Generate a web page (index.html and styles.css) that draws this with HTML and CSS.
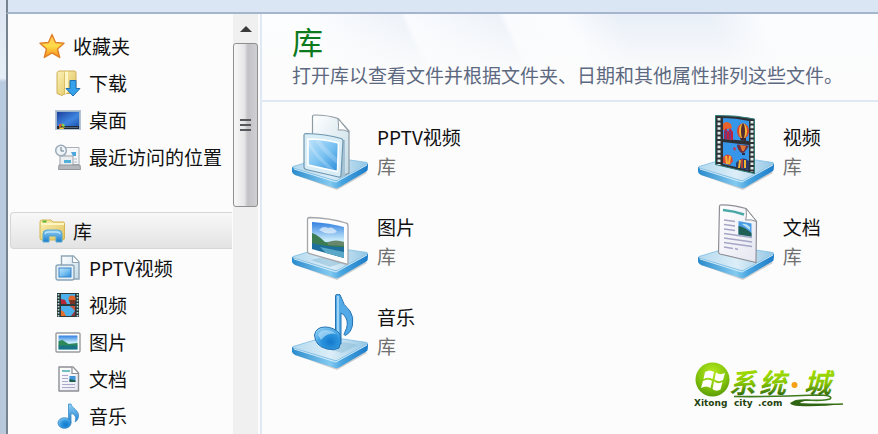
FILE: index.html
```
<!DOCTYPE html>
<html lang="zh-CN">
<head>
  <meta charset="UTF-8">
  <meta name="viewport" content="width=device-width, initial-scale=1">
  <title>库</title>
  <link rel="stylesheet" href="styles.css">
</head>
<body>
  <!-- shared gradients and the base plate of the library icons -->
  <svg class="defs" aria-hidden="true">
    <defs>
      <linearGradient id="gStar" x1="0" y1="0" x2="0" y2="1"><stop offset="0" stop-color="#ffc45a"/><stop offset=".5" stop-color="#ffdc48"/><stop offset="1" stop-color="#f58a18"/></linearGradient>
      <linearGradient id="gFolder" x1="0" y1="0" x2="1" y2="1"><stop offset="0" stop-color="#fbf0b4"/><stop offset="1" stop-color="#dfc25a"/></linearGradient>
      <linearGradient id="gBlue" x1="0" y1="0" x2="0" y2="1"><stop offset="0" stop-color="#8fd0f5"/><stop offset="1" stop-color="#1a7ccc"/></linearGradient>
      <linearGradient id="gDesk" x1="0" y1="0" x2="1" y2="1"><stop offset="0" stop-color="#1b3f9c"/><stop offset=".6" stop-color="#3f86e0"/><stop offset="1" stop-color="#1d55b5"/></linearGradient>
      <linearGradient id="gScreen" x1="0" y1="0" x2="1" y2="1"><stop offset="0" stop-color="#bfe3fa"/><stop offset=".5" stop-color="#7cc3f2"/><stop offset="1" stop-color="#2b8ddc"/></linearGradient>
      <linearGradient id="gPaper" x1="0" y1="0" x2="1" y2="1"><stop offset="0" stop-color="#ffffff"/><stop offset="1" stop-color="#c3dbe6"/></linearGradient>
      <linearGradient id="gDoc" x1="0" y1="0" x2="1" y2="1"><stop offset="0" stop-color="#ffffff"/><stop offset="1" stop-color="#e6e6f2"/></linearGradient>
      <linearGradient id="gSky" x1="0" y1="0" x2="0" y2="1"><stop offset="0" stop-color="#2f7fe0"/><stop offset=".5" stop-color="#c9ebfb"/><stop offset="1" stop-color="#8cc4e6"/></linearGradient>
      <linearGradient id="gTop" x1="0" y1="0" x2="1" y2="0"><stop offset="0" stop-color="#b4d9ee"/><stop offset=".5" stop-color="#dceef8"/><stop offset="1" stop-color="#94c6e4"/></linearGradient>
      <linearGradient id="gSide" x1="0" y1="0" x2="1" y2="0"><stop offset="0" stop-color="#2b8bcc"/><stop offset=".5" stop-color="#84caf0"/><stop offset=".65" stop-color="#4aa6e0"/><stop offset="1" stop-color="#1c7cc8"/></linearGradient>
      <linearGradient id="gLogo" x1="0" y1="0" x2="0" y2="1"><stop offset=".3" stop-color="#9cd800"/><stop offset=".55" stop-color="#86c400"/><stop offset=".85" stop-color="#2f6a10"/></linearGradient>
      <radialGradient id="gBall" cx=".5" cy=".3" r=".7"><stop offset="0" stop-color="#b8ea20"/><stop offset=".6" stop-color="#84c60c"/><stop offset="1" stop-color="#5c9c08"/></radialGradient>
      <radialGradient id="gHead" cx=".6" cy=".65" r=".7"><stop offset="0" stop-color="#1379cc"/><stop offset=".5" stop-color="#2c95de"/><stop offset="1" stop-color="#8ccdf4"/></radialGradient>
      <symbol id="plate" viewBox="0 0 76 76">
        <path d="M3 61 L45 76 L75 59 L70 55 L8 57Z" fill="#000" opacity=".18"/>
        <path d="M0 53 L0 58 Q1 60 3 61 L43 74 Q45 74.500 47 73.500 L75 57 Q76 56 76 50Z" fill="url(#gSide)"/>
        <path d="M1 52.500 L33 43 Q35 42.500 37 43 L75 48.500 Q76.500 49.500 75 50.500 L47 65.500 Q45 67 43 66.500 L1 54Z" fill="url(#gTop)" stroke="#7dbde2" stroke-width=".8"/>
        <path d="M2 55 L44 68 L75 51" fill="none" stroke="#f2fbff" stroke-width="1" opacity=".8"/>
      </symbol>
      <symbol id="video" viewBox="0 0 26 26">
        <rect x="2" y="1" width="22" height="24" fill="#2d3a3c"/>
        <path d="M3.500 2v23M22.500 2v23" stroke="#b7dcdc" stroke-width="1.600" stroke-dasharray="1.600 1.400"/>
        <path d="M6 2h14v10H6zM6 14h14v10H6z" fill="#4cb0ec"/>
        <path d="M6 7l4 1 2 4H6z" fill="#b3263a"/><circle cx="17" cy="7" r="3.500" fill="#e0642a"/><path d="M14 8h6v4h-5z" fill="#7a3428"/>
        <path d="M15 14h5v5z" fill="#c9543a"/><path d="M6 18l3 2 2 4H6z" fill="#e0702e"/><path d="M20 19l-4 5h4z" fill="#8c3838"/>
      </symbol>
    </defs>
  </svg>

  <div class="window">
    <div class="toolbar"></div>
    <div class="content">
      <nav class="sidebar" aria-label="导航窗格">
        <ul class="tree">
          <li>
            <a class="node" href="#">
              <svg class="icon" viewBox="0 0 26 26"><path d="M13 1.500l3.500 8 8.500.8-6.500 5.700 2.200 8.500-7.700-4.600-7.700 4.600L7.500 16 1 10.300l8.500-.8z" fill="url(#gStar)" stroke="#e0812a" stroke-width="1.400" stroke-linejoin="round"/></svg>
              收藏夹
            </a>
          </li>
          <li>
            <a class="node child" href="#">
              <svg class="icon" viewBox="0 0 26 26"><path d="M2 2.500L4 1h15.500q1.500 0 1.500 1.500V22q0 1.500-1.500 1.500H10l-3 2-5-2z" fill="url(#gFolder)" stroke="#cfae58"/><path d="M10 2.500v22" stroke="#d7b654" stroke-width="1.500"/><path d="M10 2l3-.5v20l-3 3z" fill="#fff6c8"/><path d="M15 10.500h6v8h4l-7 7.500-7-7.500h4z" fill="#37a2ec" stroke="#1f6fb4" stroke-linejoin="round"/></svg>
              下载
            </a>
          </li>
          <li>
            <a class="node child" href="#">
              <svg class="icon" viewBox="0 0 26 26"><rect x=".5" y="3.500" width="25" height="19" fill="#9fb4c8" stroke="#b4c4d4"/><rect x="2" y="5" width="22" height="14" fill="url(#gDesk)"/><path d="M2 19h22v3H2z" fill="#1e2a3a"/><path d="M9 20.500h14" stroke="#586878"/><path d="M4 17.500l2.500-1v3l-2.500.5z" fill="#f0602a"/><path d="M7 16.500l2.500 1v2.500L7 19.500z" fill="#8bd03a"/><path d="M4 20.500h5.500l-1 1.500h-4z" fill="#f8d038"/></svg>
              桌面
            </a>
          </li>
          <li>
            <a class="node child" href="#">
              <svg class="icon" viewBox="0 0 26 26"><path d="M10 3.500h14v17H10z" fill="#f4f6f8" stroke="#aab0b6"/><path d="M5 12h13v11H5z" fill="#eceff2" stroke="#9ca2a8"/><path d="M4 21h21l.5 4.500H3.500z" fill="#b4b8bc" stroke="#94989c"/><path d="M9 16h7v3H9z" fill="#4fb0d8"/><path d="M16 8h5v4h-3z" fill="#4da6e0"/><path d="M19 15h3M19 18h3" stroke="#b8bec4"/><circle cx="6" cy="6.500" r="5.300" fill="#eef4f8" stroke="#9cabb8" stroke-width="1.500"/><path d="M6 3v4h3" fill="none" stroke="#667888"/></svg>
              最近访问的位置
            </a>
          </li>
        </ul>
        <ul class="tree">
          <li>
            <a class="node selected" href="#" aria-current="page">
              <svg class="icon" viewBox="0 0 26 26"><path d="M1 4q0-2 2-2h9l2 2h10q1.500 0 1.500 1.500V20q0 2-2 2H3q-2 0-2-2z" fill="url(#gFolder)" stroke="#d4b650"/><path d="M2 6h23" stroke="#fff5c0" stroke-width="2"/><rect x="3.500" y="2.500" width="4" height="2" fill="#58b830"/><path d="M4 24v-8q0-4 4-4h11q4 0 4 4v8h-6v-6h-7v6z" fill="url(#gBlue)" stroke="#5aa8cc" stroke-linejoin="round"/><path d="M6 16q0-2 3-2h9q3 0 3 2" fill="none" stroke="#d8f2fc"/></svg>
              库
            </a>
          </li>
          <li>
            <a class="node child" href="#">
              <svg class="icon" viewBox="0 0 26 26"><path d="M6.500 1h12l5.500 6v17H6.500z" fill="url(#gPaper)" stroke="#8fa6b6" stroke-width="1.400"/><path d="M17.500 1v6.500H24" fill="#fff" stroke="#8fa6b6" stroke-width="1.200"/><rect x="1" y="10" width="18" height="15" rx="2" fill="#e4f0f6" stroke="#8ba4b8" stroke-width="1.400"/><rect x="4" y="13" width="12" height="9" fill="url(#gScreen)" stroke="#3c86c8"/></svg>
              PPTV视频
            </a>
          </li>
          <li>
            <a class="node child" href="#">
              <svg class="icon"><use href="#video"/></svg>
              视频
            </a>
          </li>
          <li>
            <a class="node child" href="#">
              <svg class="icon" viewBox="0 0 26 26"><rect x="1" y="4" width="24" height="19" rx="1" fill="#fff" stroke="#969ca0" stroke-width="1.400"/><rect x="3.500" y="6.500" width="19" height="14" fill="url(#gSky)"/><path d="M3.500 12l4-1 6 4 9-1v3h-19z" fill="#2d8a58"/><path d="M3.500 16.500h19v4h-19z" fill="#1b7486"/></svg>
              图片
            </a>
          </li>
          <li>
            <a class="node child" href="#">
              <svg class="icon" viewBox="0 0 26 26"><path d="M4 1h14l5.500 6v18H4z" fill="url(#gDoc)" stroke="#8c8f94" stroke-width="1.400" stroke-linejoin="round"/><path d="M17 1v6.500h6" fill="#fff" stroke="#8c8f94" stroke-width="1.200"/><path d="M7 5h8" stroke="#3aa8a8" stroke-width="1.400"/><path d="M7 9.500h6M7 12.500h6M7 15.500h6M7 18.500h13M7 21.500h13" stroke="#a9a9cc"/><rect x="14.500" y="10" width="6" height="6" fill="#3f94d8"/><path d="M14.500 13l6 1.500V16h-6z" fill="#1c6048"/></svg>
              文档
            </a>
          </li>
          <li>
            <a class="node child" href="#">
              <svg class="icon" viewBox="0 0 26 26"><path d="M13.500 1h2.500c.5 4 8 6 7.500 12-.2 3-1.500 5-3.500 6 2-5-.5-8-4-8.500V20h-2.500z" fill="url(#gBlue)" stroke="#3b8fca" stroke-width=".8"/><ellipse cx="9.500" cy="20" rx="6.500" ry="5.300" fill="url(#gHead)" stroke="#2a7fc0" stroke-width=".8"/></svg>
              音乐
            </a>
          </li>
        </ul>
      </nav>

      <div class="scrollbar">
        <button class="scroll-up" type="button" aria-label="向上滚动"></button>
        <div class="thumb"><span></span><span></span><span></span></div>
      </div>

      <main class="pane">
        <header class="pane-header">
          <h1>库</h1>
          <p>打开库以查看文件并根据文件夹、日期和其他属性排列这些文件。</p>
        </header>

        <div class="libraries">
          <a class="library" href="#">
            <svg class="big-icon" viewBox="0 0 76 76">
              <use href="#plate"/>
              <path d="M20.500 3Q20.500 1 22.500 1Q36 1 46 4.500L57 17V59L50 62L20.500 52Z" fill="url(#gPaper)" stroke="#8f9ba3" stroke-width="1.200"/>
              <path d="M46 4.500Q47 14 46 16Q52 15 57 18Z" fill="#fff" stroke="#8f9ba3"/>
              <path d="M50.500 26L53 26V61L48 64Z" fill="#a5c3d2"/>
              <path d="M12 21Q12 19.500 14 19.500Q34 20 49 24.500Q51 25 51 27L49 61Q49 63.500 46.500 63L14 55.500Q12 55 12 53Z" fill="#d9edf6" stroke="#6f96ae" stroke-width="1.200"/>
              <path d="M16 25Q32 25 46.500 29L45.500 57.500L16 51Z" fill="url(#gScreen)" stroke="#fff" stroke-width="1.600"/>
              <path d="M17 27Q24 40 43 56L36 54.500Q22 42 17 32Z" fill="#fff" opacity=".2"/>
              <path d="M28 27Q36 36 45 44V50Q30 38 23 26.500Z" fill="#fff" opacity=".2"/>
            </svg>
            <span class="label"><strong>PPTV视频</strong><small>库</small></span>
          </a>

          <a class="library" href="#">
            <svg class="big-icon" viewBox="0 0 76 76">
              <use href="#plate"/>
              <path d="M17.500 1.500Q38 1 56.500 5V59.500L45 57L17.500 50.500Z" fill="#2e3033" stroke="#2f7e7c" stroke-width="1"/>
              <path d="M21 4V51M54 7V58" fill="none" stroke="#dcebea" stroke-width="3" stroke-dasharray="2.600 2"/>
              <path d="M25 4Q38 4 51 7V27L25 25Z" fill="#3596ea"/>
              <path d="M25 28L51 31V56L25 50Z" fill="#3596ea"/>
              <path d="M25 10q3-4 8 0l1 4-9 2z" fill="#e8622a"/>
              <path d="M26 17l2-3 2 4 2-4 3 4v8l-9-1z" fill="#c41f3c"/>
              <path d="M28 17v8M32 17v8" stroke="#3450b0" stroke-width="1.200"/>
              <ellipse cx="45" cy="17" rx="6" ry="7.500" fill="#d8442c"/><ellipse cx="45" cy="17" rx="4" ry="7.500" fill="#f2b62e"/><ellipse cx="45" cy="17" rx="2" ry="7.500" fill="#522a35"/><path d="M42 24h6v3l-5-.5z" fill="#402830"/>
              <path d="M39 30.500l12 1.200-2 3-3 4h-3q-4-4-4-8" fill="#6b3040"/><path d="M42 31l6 1-2 5h-2z" fill="#e07434"/><path d="M44 39h3v2h-3z" fill="#2d2d48"/>
              <path d="M36 33l2 1-1 3-2-2z" fill="#c8364c"/>
              <path d="M25 43q5-5 9 0l1 4-3 4-7-2z" fill="#d94b34"/><path d="M28 42l1 8M32 42l-1 8" stroke="#f4b436" stroke-width="2"/>
              <path d="M38 49q7-8 13-2v9l-13-3z" fill="#2d3a6a"/><path d="M42 46l-1 8M47 46v8" stroke="#f1b433" stroke-width="2"/><path d="M44 45v9" stroke="#d3412e" stroke-width="1.600"/>
            </svg>
            <span class="label"><strong>视频</strong><small>库</small></span>
          </a>

          <a class="library" href="#">
            <svg class="big-icon" viewBox="0 0 76 76">
              <use href="#plate"/>
              <path d="M19 56L31 53L50 59L38 63Z" fill="#84b7d4" opacity=".5"/>
              <path d="M15.500 15Q15.500 13.500 17.500 13.500Q38 14 54 19Q56 19.500 56 21.500V59Q56 60.500 54 60L17 49.500Q15.500 49 15.500 47.500Z" fill="#fdfdfd" stroke="#a4a6aa" stroke-width="1.300"/>
              <path d="M20 18Q37 19 52 23V54L20 45Z" fill="url(#gSky)"/>
              <path d="M27 26q4-5 9-2q5-2 9 4q-9 4-18-2" fill="#fff" opacity=".6"/>
              <path d="M20 29Q26 31 33 38L52 40V45L20 41Z" fill="#3c7c52"/>
              <path d="M36 38q8-3 16 0v4l-16-1z" fill="#68876c"/>
              <path d="M20 39Q35 43 52 43V54L20 45Z" fill="#1f6f9c"/>
              <path d="M28 43L52 48V54L34 49Z" fill="#5aa8c8"/>
            </svg>
            <span class="label"><strong>图片</strong><small>库</small></span>
          </a>

          <a class="library" href="#">
            <svg class="big-icon" viewBox="0 0 76 76">
              <use href="#plate"/>
              <path d="M21.500 2Q21.500 .8 23.500 .8Q37 1 48 4.500L58.500 17.500L58 58.500L22 50Q20.500 49.500 20.500 48Z" fill="url(#gDoc)" stroke="#8d8f95" stroke-width="1.200"/>
              <path d="M48 4.500Q49 13 47.500 16Q53 15 58.500 17.500Z" fill="#fff" stroke="#8d8f95"/>
              <path d="M25 6Q36 7 46 10.500" fill="none" stroke="#4aa9a6" stroke-width="2.600"/>
              <path d="M26 16l11 1.500M26 20.500l11 1.500M26 25l11 1.500M26 29.500l28 4M26 34l28 4M26 38.500l28 4M26 43l9 1.500M37 44.500l3 1" stroke="#a5a5c6" stroke-width="1.400"/>
              <path d="M40.500 17l13 2.500v13l-13-2z" fill="#4c9ce4"/><path d="M40.500 22q6 1 13 7v3.500l-13-2z" fill="#1f5f54"/><path d="M44 20q4-1 8 3v3z" fill="#b9e3f6"/>
            </svg>
            <span class="label"><strong>文档</strong><small>库</small></span>
          </a>

          <a class="library" href="#">
            <svg class="big-icon" viewBox="0 0 76 76">
              <use href="#plate"/>
              <path d="M36 55L52 48L66 51L50 59Z" fill="#7fb3d0" opacity=".4"/>
              <path d="M43.500 2Q43.500 0 46 0Q48.500 0 49 3Q51 11 58 17Q62 23 60.500 31Q59 39 53 41.500Q51 41 53 38Q57 30 54 24Q52 20 49 19V50H43.500Z" fill="#54aae6" stroke="#2474b4" stroke-width="1"/>
              <path d="M46 2V44" stroke="#bde5fb" stroke-width="1.400"/>
              <path d="M22.500 41Q24 33 33 33Q42 33 48 40Q50 48 47 54Q42 57 35 55Q23 52 22.500 41Z" fill="url(#gHead)" stroke="#2474b4" stroke-width="1"/>
              <path d="M26 41Q28 36 34 36Q40 36 44 40Q36 38 29 46Z" fill="#c4e8fc" opacity=".6"/>
            </svg>
            <span class="label"><strong>音乐</strong><small>库</small></span>
          </a>
        </div>
      </main>
    </div>

    <svg class="watermark" viewBox="0 0 152 48" role="img" aria-label="系统城 Xitong city.com">
      <circle cx="18.500" cy="17.500" r="17" fill="url(#gBall)"/>
      <path d="M11 10q5-3 9 0l-1.500 7q-4-2.500-9 0zM22 10.500q4 3 9 .5l-2 7q-4 2.500-8.500-.5zM9 19q5-2.500 9 0l-1.500 7q-4-3-9.500 0zM20 19.500q4 3 8.500.5l-2 7.500q-4 2.500-8-.5z" fill="#fff"/>
      <path d="M40 34.500Q80 35 122 33Q140 33 136 37Q130 39 112 38Q98 38 100 41Q106 43 149 42" fill="none" stroke="#3f7a1c" stroke-width="1.600"/>
      <path d="M96 41q6-4 22-3-12 1-12 3.500 14 1 43 .5-24 3-44 2-8-.5-9-3" fill="#2f6414"/>
      <g class="logo-name" fill="url(#gLogo)">
        <text x="35" y="31">系</text>
        <text x="65" y="31">统</text>
        <text x="110" y="31">城</text>
      </g>
      <circle cx="100.500" cy="23" r="3" fill="#f7a11a"/>
      <g class="logo-url">
        <text x="0" y="44">Xitong</text>
        <text x="40" y="44">city</text>
        <text x="64" y="44">.com</text>
      </g>
    </svg>
  </div>
</body>
</html>
```
FILE: styles.css
```
* {
  box-sizing: border-box;
}
body {
  margin: 0;
  font-family: "Noto Sans CJK SC", "Noto Sans", sans-serif;
  font-size: 19px;
  line-height: 29px;
  color: #111;
  background: #fcfcfc;
}
a {
  color: inherit;
  text-decoration: none;
}
.defs {
  position: absolute;
  width: 0;
  height: 0;
}

/* Window frame */
.window {
  position: relative;
  display: flex;
  flex-direction: column;
  height: 100vh;
  overflow: hidden;
  padding-left: 6px;
  background: linear-gradient(#dde6f1 0, #e6eef7 78px, #b9cbe0 82px, #b9c9dc 100%);
}
.toolbar {
  flex: none;
  height: 14px;
  background: #dae6f4;
  border-left: 2px solid #77838f;
  border-bottom: 2px solid #a5b5cd;
}
.content {
  flex: 1;
  display: flex;
  min-height: 0;
  border-left: 2px solid #77838f;
  background: #fcfcfc;
}

/* Navigation tree */
.sidebar {
  flex: none;
  width: 225px;
  padding: 13px 1px 0 2px;
  overflow: hidden;
}
.tree {
  list-style: none;
  margin: 0 0 37px;
  padding: 0;
}
.node {
  display: flex;
  align-items: center;
  gap: 8px;
  height: 37px;
  padding-left: 28px;
  border: 1px solid transparent;
  white-space: nowrap;
}
.node.child {
  padding-left: 44px;
}
.node.selected {
  border-color: #d6d6d6;
  border-right: none;
  border-radius: 4px 0 0 4px;
  background: linear-gradient(#f8f8f8, #e3e3e3);
}
.icon {
  flex: none;
  width: 26px;
  height: 26px;
}

/* Scrollbar */
.scrollbar {
  flex: none;
  display: flex;
  flex-direction: column;
  width: 25px;
  background: #f0f0f0;
}
.scroll-up {
  flex: none;
  display: flex;
  justify-content: center;
  align-items: center;
  height: 29px;
  padding: 0;
  border: none;
  background: none;
}
.scroll-up::before {
  content: "";
  border: 6px solid transparent;
  border-top: none;
  border-bottom: 6px solid #3a3a3a;
}
.thumb {
  flex: 0 0 39%;
  display: flex;
  flex-direction: column;
  justify-content: center;
  align-items: center;
  gap: 3px;
  border: 1px solid #8f8f8f;
  border-radius: 3px;
  background: linear-gradient(90deg, #f8f8f8, #e6e6e8 45%, #c2c2c6 60%, #d0d0d4);
}
.thumb span {
  width: 11px;
  height: 2px;
  background: #55585c;
}

/* Library pane */
.pane {
  flex: 1;
  min-width: 0;
  margin-left: 2px;
  border-left: 2px solid #dfe9f5;
}
.pane-header {
  height: 88px;
  padding: 8px 0 0 30px;
  border-bottom: 2px solid #dfe8f3;
  background:
    linear-gradient(rgba(252, 252, 252, 0), #fcfcfc 75%),
    linear-gradient(65deg, #fcfdff 12%, #edf2f9 27%, #f9fbfe 28%, #edf2f9 42%, #f9fbfe 43%, #fafcfe 52%, #e9eff8 60%, #e9eff8 74%, #fafcfe 82%);
}
.pane-header h1 {
  margin: 0;
  font-size: 31px;
  font-weight: 400;
  line-height: 38px;
  color: #0c7a1c;
}
.pane-header p {
  margin: 0;
  color: #5c6980;
  white-space: nowrap;
}
.libraries {
  display: grid;
  grid-template-columns: 9fr 4fr;
  row-gap: 14px;
  padding: 12px 0 0 30px;
}
.library {
  display: flex;
  gap: 9px;
}
.big-icon {
  flex: none;
  width: 76px;
  height: 76px;
}
.label {
  display: flex;
  flex-direction: column;
  padding-top: 8px;
  white-space: nowrap;
}
.label strong {
  font-weight: 400;
}
.label small {
  font-size: 19px;
  color: #707070;
}

/* Site mark over the lower right corner */
.watermark {
  position: absolute;
  right: 32px;
  bottom: 24px;
  width: 152px;
  height: 48px;
}
.logo-name {
  font-size: 27px;
  font-weight: 700;
  font-style: italic;
}
.logo-url {
  font-family: "DejaVu Sans", sans-serif;
  font-size: 9px;
  font-weight: 700;
  fill: #24420f;
}
```
